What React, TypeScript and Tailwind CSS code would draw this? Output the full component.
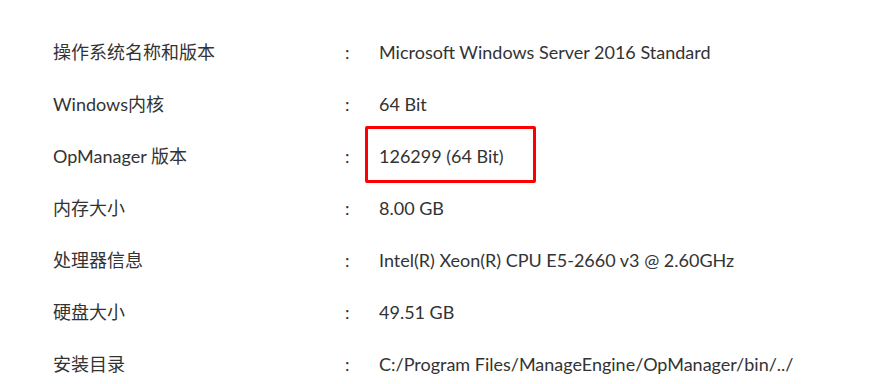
import React from "react";

const rows: { label: string; value: string; boxed?: boolean }[] = [
  { label: "操作系统名称和版本", value: "Microsoft Windows Server 2016 Standard" },
  { label: "Windows内核", value: "64 Bit" },
  { label: "OpManager 版本", value: "126299 (64 Bit)", boxed: true },
  { label: "内存大小", value: "8.00 GB" },
  { label: "处理器信息", value: "Intel(R) Xeon(R) CPU E5-2660 v3 @ 2.60GHz" },
  { label: "硬盘大小", value: "49.51 GB" },
  { label: "安装目录", value: "C:/Program Files/ManageEngine/OpManager/bin/../" },
];

export default function App() {
  return (
    <div
      className="w-[869px] h-[384px] bg-white overflow-hidden flex flex-col"
      style={{ fontFamily: '"Lato", "Noto Sans CJK SC", sans-serif' }}
    >
      <div className="flex-1 flex flex-col pt-[26px] pl-[53px] text-[18px] text-[#333333]">
        {rows.map((r) => (
          <div key={r.label} className="relative h-[52px] flex items-center shrink-0">
            <div className="w-[292px]">{r.label}</div>
            <div className="w-[34px]">:</div>
            <div>{r.value}</div>
            {r.boxed && (
              <div className="absolute left-[312px] top-[-4px] w-[171px] h-[57px] border-[3px] border-[#ff0000] rounded-[2px]" />
            )}
          </div>
        ))}
      </div>
      <div className="h-[3px] bg-[#e4e4e4] shrink-0" />
    </div>
  );
}
